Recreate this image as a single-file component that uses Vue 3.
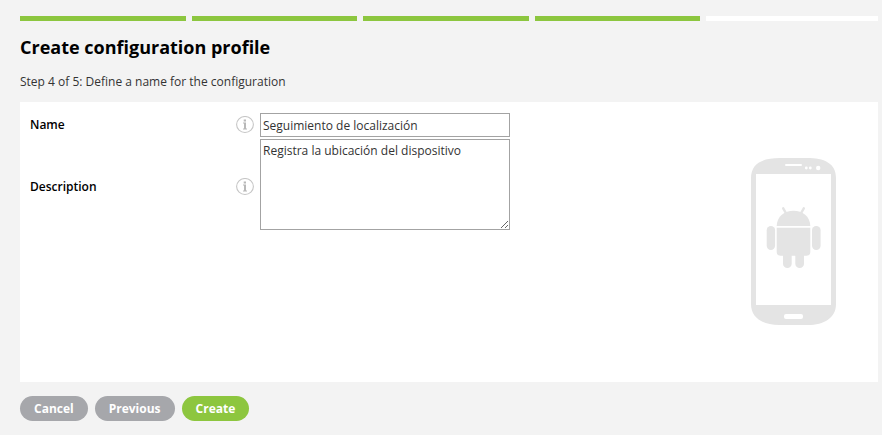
<script setup>
import { ref } from 'vue'

const totalSteps = 5
const currentStep = 4
const name = ref('Seguimiento de localización')
const description = ref('Registra la ubicación del dispositivo')
</script>

<template>
  <main class="wizard">
    <ol class="progress" aria-label="Progress">
      <li v-for="step in totalSteps" :key="step" :class="{ done: step <= currentStep }"></li>
    </ol>
    <h1>Create configuration profile</h1>
    <p class="step">Step {{ currentStep }} of {{ totalSteps }}: Define a name for the configuration</p>

    <form id="profile-form" class="panel" @submit.prevent>
      <div class="fields">
        <label for="profile-name">Name</label>
        <svg class="info" viewBox="0 0 18 18" aria-hidden="true">
          <ellipse cx="9" cy="8.5" rx="8.4" ry="8" fill="none" stroke="#c6c6c6" stroke-width="1.1" />
          <path d="M7.700 3.500h2.300v2H7.700zM7 6.500h3V12.500h1v1H7v-1h1V7.500H7z" fill="#b8b8b8" />
        </svg>
        <input id="profile-name" v-model="name" type="text" />

        <label for="profile-description">Description</label>
        <svg class="info" viewBox="0 0 18 18" aria-hidden="true">
          <ellipse cx="9" cy="8.5" rx="8.4" ry="8" fill="none" stroke="#c6c6c6" stroke-width="1.1" />
          <path d="M7.700 3.500h2.300v2H7.700zM7 6.500h3V12.500h1v1H7v-1h1V7.500H7z" fill="#b8b8b8" />
        </svg>
        <textarea id="profile-description" v-model="description" spellcheck="false"></textarea>
      </div>

      <svg class="phone" viewBox="0 0 85 167" fill="#e4e4e4" aria-hidden="true">
        <path
          fill-rule="evenodd"
          d="M0 20C0 5 12 0 29 0H56C73 0 85 5 85 20V146C85 160 73 167 57 167H28C12 167 0 160 0 146ZM5 16V147H80V16Z"
        />
        <g fill="#fff">
          <rect x="34" y="6" width="17" height="2" rx="1" />
          <circle cx="55.3" cy="10" r="1.4" />
          <circle cx="59.3" cy="10" r="1.4" />
          <circle cx="67.2" cy="10" r="2.2" />
          <rect x="33" y="156" width="19" height="5" rx="2" />
        </g>
        <path d="M32.2 50.3L36 57M52.8 50.3L49 57" stroke="#e4e4e4" stroke-width="2.4" stroke-linecap="round" />
        <path d="M25.7 68C26 58 33.5 52.7 42.5 52.7S59 58 59.3 68Z" />
        <path
          d="M25.7 69.7H59.3V94Q59.3 97.7 55.5 97.7H53V105.7A4.35 4.35 0 0 1 44.3 105.7V97.7H40.7V105.7A4.35 4.35 0 0 1 32 105.7V97.7H29.5Q25.7 97.7 25.7 94Z"
        />
        <rect x="15.7" y="68" width="8.4" height="24" rx="4.2" />
        <rect x="61" y="68" width="8.6" height="24" rx="4.2" />
      </svg>
    </form>

    <div class="actions">
      <button type="button">Cancel</button>
      <button type="button">Previous</button>
      <button type="submit" form="profile-form" class="primary">Create</button>
    </div>
  </main>
</template>

<style>
body {
  background: #f3f3f3;
}
</style>

<style scoped>
.wizard {
  padding: 16px 4px 14px 20px;
  font-family: 'Open Sans', 'Noto Sans', sans-serif;
  font-size: 12px;
  line-height: 16px;
  color: #333;
}

.progress {
  display: grid;
  grid-template-columns: repeat(5, 1fr);
  margin: 0;
  padding: 0;
  list-style: none;
}

.progress li {
  height: 5px;
  margin-right: 6px;
  background: #fff;
}

.progress li:last-child {
  margin-right: 0;
}

.progress .done {
  background: #8cc63f;
}

h1 {
  margin: 14px 0 0;
  font-size: 18px;
  font-weight: 700;
  line-height: 24px;
  color: #000;
}

.step {
  margin: 15px 0 12px;
}

.panel {
  display: flex;
  justify-content: space-between;
  align-items: center;
  box-sizing: border-box;
  min-height: 280px;
  padding: 11px 42px 12px 10px;
  background: #fff;
}

.fields {
  display: grid;
  grid-template-columns: 200px 18px 250px;
  grid-template-rows: 24px 95px;
  column-gap: 6px;
  row-gap: 2px;
  align-items: center;
  align-self: flex-start;
}

label {
  font-weight: 600;
  color: #000;
}

.info {
  width: 18px;
  height: 18px;
}

input,
textarea {
  display: block;
  box-sizing: border-box;
  width: 100%;
  margin: 0;
  padding: 2px;
  border: 1px solid #a3a3a3;
  border-radius: 0;
  background: #fff;
  font: inherit;
  color: #333;
}

input {
  height: 24px;
}

textarea {
  align-self: start;
  height: 91px;
  padding-top: 3px;
  resize: both;
}

.phone {
  flex: none;
  width: 85px;
  height: 167px;
}

.actions {
  display: flex;
  gap: 7px;
  margin-top: 14px;
}

button {
  height: 25px;
  padding: 0 14px;
  border: 0;
  border-radius: 13px;
  background: #a6a7ab;
  font: inherit;
  font-weight: 700;
  color: #fff;
  cursor: pointer;
}

button.primary {
  background: #8dc63f;
}
</style>
